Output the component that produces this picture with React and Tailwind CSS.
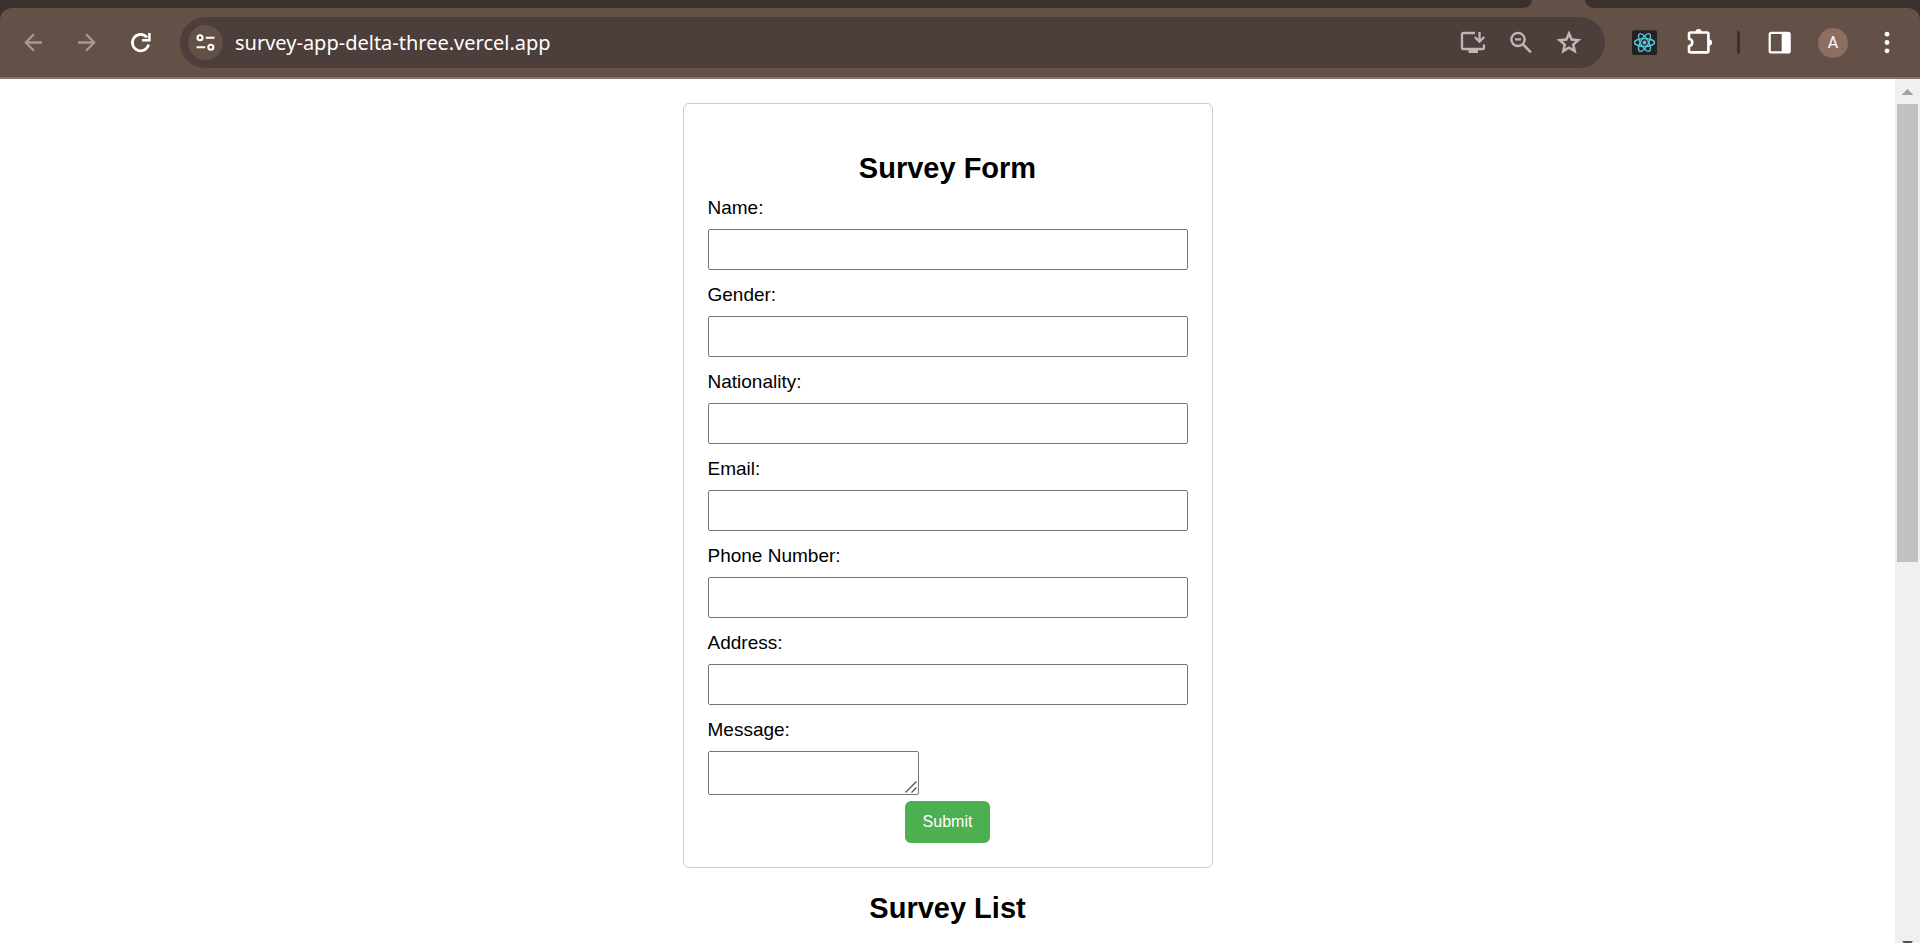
import React from "react";

const FIELDS = [
  { id: "name", label: "Name:", type: "text" },
  { id: "gender", label: "Gender:", type: "text" },
  { id: "nationality", label: "Nationality:", type: "text" },
  { id: "email", label: "Email:", type: "email" },
  { id: "phone", label: "Phone Number:", type: "tel" },
  { id: "address", label: "Address:", type: "text" },
];

function Glyph({ children }) {
  return (
    <svg className="h-[29px] w-7 overflow-visible" viewBox="0 0 28 29" fill="none" stroke="currentColor" aria-hidden="true">
      {children}
    </svg>
  );
}

function BarButton({ label, children, className = "text-white" }) {
  return (
    <button type="button" aria-label={label} className={`flex h-full w-[54px] shrink-0 items-center justify-center ${className}`}>
      {children}
    </button>
  );
}

function PillButton({ label, children }) {
  return (
    <button type="button" aria-label={label} className="flex h-full w-12 shrink-0 items-center justify-center text-[#bdb7b5]">
      {children}
    </button>
  );
}

function TabStrip() {
  return (
    <div className="flex h-2 bg-[#635046]">
      <div className="flex-1 rounded-br-[10px_8px] bg-[#3c302c]" />
      <div className="w-[53px]" />
      <div className="w-[335px] rounded-bl-[10px_8px] bg-[#3c302c]" />
    </div>
  );
}

function AddressBar() {
  return (
    <div className="mx-3 flex h-[51px] flex-1 items-center rounded-full bg-[#4c3e3b] pl-2 pr-3">
      <button type="button" aria-label="View site information" className="flex size-[35px] shrink-0 items-center justify-center rounded-full bg-[#635046] text-white">
        <svg className="size-[21px]" viewBox="0 0 21 21" fill="none" stroke="currentColor" strokeWidth="2.1" aria-hidden="true">
          <circle cx="5" cy="5.7" r="2.5" />
          <path d="M10.8 5.7h8.7M1.5 15.3h8.7" />
          <circle cx="15.8" cy="15.3" r="2.5" />
        </svg>
      </button>
      <input
        aria-label="Address"
        defaultValue="survey-app-delta-three.vercel.app"
        className="ml-3 min-w-0 flex-1 bg-transparent font-['Noto_Sans',sans-serif] text-[20px] leading-7 text-white outline-none"
      />
      <PillButton label="Install app">
        <Glyph>
          <path strokeWidth="2.3" d="M16 5H4.5Q3 5 3 6.5v13Q3 21 4.5 21h19Q25 21 25 19.5V16.5" />
          <path strokeWidth="2.3" d="M20.5 4v9.5M15.8 9l4.7 4.7L25.200 9" />
          <path fill="currentColor" stroke="none" d="M9.5 21H19v4H9.5z" />
        </Glyph>
      </PillButton>
      <PillButton label="Zoom">
        <Glyph>
          <circle cx="11" cy="11.4" r="6.6" strokeWidth="2.3" />
          <path strokeWidth="2.3" d="M8 11.4h6" />
          <path strokeWidth="2.6" d="M15.7 16.1l8.2 8.2" />
        </Glyph>
      </PillButton>
      <PillButton label="Bookmark this tab">
        <Glyph>
          <path
            strokeWidth="2.5"
            d="M14 5.4l2.6 6.2 6.7.6-5.1 4.4 1.5 6.5L14 19.700 8.300 23.100l1.500-6.500-5.100-4.400 6.700-.6z"
          />
        </Glyph>
      </PillButton>
    </div>
  );
}

function BrowserBar() {
  return (
    <header className="shrink-0 bg-[#3c302c]">
      <TabStrip />
      <div className="flex h-[71px] items-center rounded-t-xl border-b-2 border-[#85766d] bg-[#635046] px-1.5">
        <BarButton label="Back" className="text-[#a59a94]">
          <Glyph>
            <path strokeWidth="2.3" d="M23 14.5H6.5M15 6.3l-8.2 8.2 8.2 8.2" />
          </Glyph>
        </BarButton>
        <BarButton label="Forward" className="text-[#a59a94]">
          <Glyph>
            <path strokeWidth="2.3" d="M5 14.5h16.5M13 6.3l8.2 8.2-8.2 8.2" />
          </Glyph>
        </BarButton>
        <BarButton label="Reload">
          <Glyph>
            <path strokeWidth="2.7" d="M21.6 16.5A8.2 8.2 0 1 1 20 9.5" />
            <path strokeWidth="2.5" d="M22.4 5v7.2H15" />
          </Glyph>
        </BarButton>
        <AddressBar />
        <BarButton label="React Developer Tools">
          <Glyph>
            <rect x="2" y="2.3" width="25" height="24.7" rx="2" fill="#222222" stroke="none" />
            <g stroke="#58c4dc" strokeWidth="1.4">
              <ellipse cx="14.5" cy="14.5" rx="10" ry="3.9" />
              <ellipse cx="14.5" cy="14.5" rx="10" ry="3.9" transform="rotate(60 14.5 14.5)" />
              <ellipse cx="14.5" cy="14.5" rx="10" ry="3.9" transform="rotate(120 14.5 14.5)" />
            </g>
            <circle cx="14.5" cy="14.5" r="1.9" fill="#58c4dc" stroke="none" />
          </Glyph>
        </BarButton>
        <BarButton label="Extensions">
          <Glyph>
            <path
              strokeWidth="2.6"
              strokeLinejoin="round"
              d="M5 10.8V6Q5 4.5 6.5 4.5H23Q24.4 4.5 24.4 6v17Q24.4 24.4 23 24.4H6.5Q5 24.4 5 23v-4.8Q8.3 17.5 8.3 14.5T5 10.8z"
            />
            <path fill="currentColor" stroke="none" d="M11.5 4a3.1 3.1 0 0 1 6.2 0zM25 11.4a3.1 3.1 0 0 1 0 6.2z" />
          </Glyph>
        </BarButton>
        <div className="flex w-[27px] shrink-0 justify-center">
          <div className="h-[23px] w-[3px] rounded-full bg-[#3c302c]" />
        </div>
        <BarButton label="Side panel">
          <Glyph>
            <rect x="4.7" y="4.9" width="20" height="19.5" rx="1.5" strokeWidth="2.2" />
            <path fill="currentColor" stroke="none" d="M16.7 4.5H25v20h-8.3z" />
          </Glyph>
        </BarButton>
        <BarButton label="Profile">
          <span className="flex size-[30px] items-center justify-center rounded-full bg-[#8d6e63] font-['Roboto',sans-serif] text-[16px] leading-5">A</span>
        </BarButton>
        <BarButton label="Menu">
          <Glyph>
            <g fill="currentColor" stroke="none">
              <circle cx="14" cy="6.2" r="2.4" />
              <circle cx="14" cy="14.5" r="2.4" />
              <circle cx="14" cy="22.8" r="2.4" />
            </g>
          </Glyph>
        </BarButton>
      </div>
    </header>
  );
}

function SurveyForm() {
  return (
    <form
      onSubmit={(event) => event.preventDefault()}
      className="flex w-full max-w-[530px] flex-col rounded-md border border-[#cccccc] p-6"
    >
      <h2 className="mb-3 mt-6 text-center text-[29px] font-bold leading-[33px]">Survey Form</h2>
      {FIELDS.map(({ id, label, type }) => (
        <div key={id} className="mb-3.5 flex flex-col gap-2.5">
          <label htmlFor={id} className="leading-[22px]">{label}</label>
          <input id={id} type={type} className="h-[41px] w-full rounded-[2px] border border-[#767676] bg-white px-2.5" />
        </div>
      ))}
      <div className="mb-1.5 flex flex-col items-start gap-2.5">
        <label htmlFor="message" className="leading-[22px]">Message:</label>
        <div className="relative flex">
          <textarea id="message" className="h-11 w-[211px] resize-none rounded-[2px] border border-[#767676] bg-white p-0.5" />
          <svg
            className="pointer-events-none absolute bottom-0.5 right-0.5 size-3"
            viewBox="0 0 12 12"
            fill="none"
            stroke="#505050"
            strokeWidth="1.3"
            aria-hidden="true"
          >
            <path d="M0.5 11.5l11-11M6.5 11.5l5-5" />
          </svg>
        </div>
      </div>
      <button type="submit" className="h-[42px] w-[85px] self-center rounded-md bg-[#4caf50] text-[16px] leading-5 text-white">
        Submit
      </button>
    </form>
  );
}

function ScrollTrack() {
  return (
    <div className="flex w-[25px] shrink-0 flex-col items-center bg-[#f0f0f0]" aria-hidden="true">
      <div className="flex h-[25px] shrink-0 items-start pt-2.5">
        <svg className="h-1.5 w-[11px]" viewBox="0 0 11 6" fill="#a3a3a3" shapeRendering="crispEdges">
          <path d="M0 6L5.5 0L11 6z" />
        </svg>
      </div>
      <div className="h-[53%] w-[21px] bg-[#c1c1c1]" />
      <div className="mt-auto h-0.5 overflow-hidden">
        <svg className="h-1.5 w-[11px]" viewBox="0 0 11 6" fill="#505050">
          <path d="M0 0h11L5.5 6z" />
        </svg>
      </div>
    </div>
  );
}

export default function App() {
  return (
    <div className="flex h-screen flex-col overflow-hidden bg-white font-['Liberation_Sans',Arial,sans-serif] text-[19px] text-black">
      <BrowserBar />
      <div className="flex min-h-0 flex-1">
        <main className="flex min-w-0 flex-1 flex-col items-center overflow-hidden pt-6">
          <SurveyForm />
          <h2 className="mt-6 text-[29px] font-bold leading-[33px]">Survey List</h2>
        </main>
        <ScrollTrack />
      </div>
    </div>
  );
}
